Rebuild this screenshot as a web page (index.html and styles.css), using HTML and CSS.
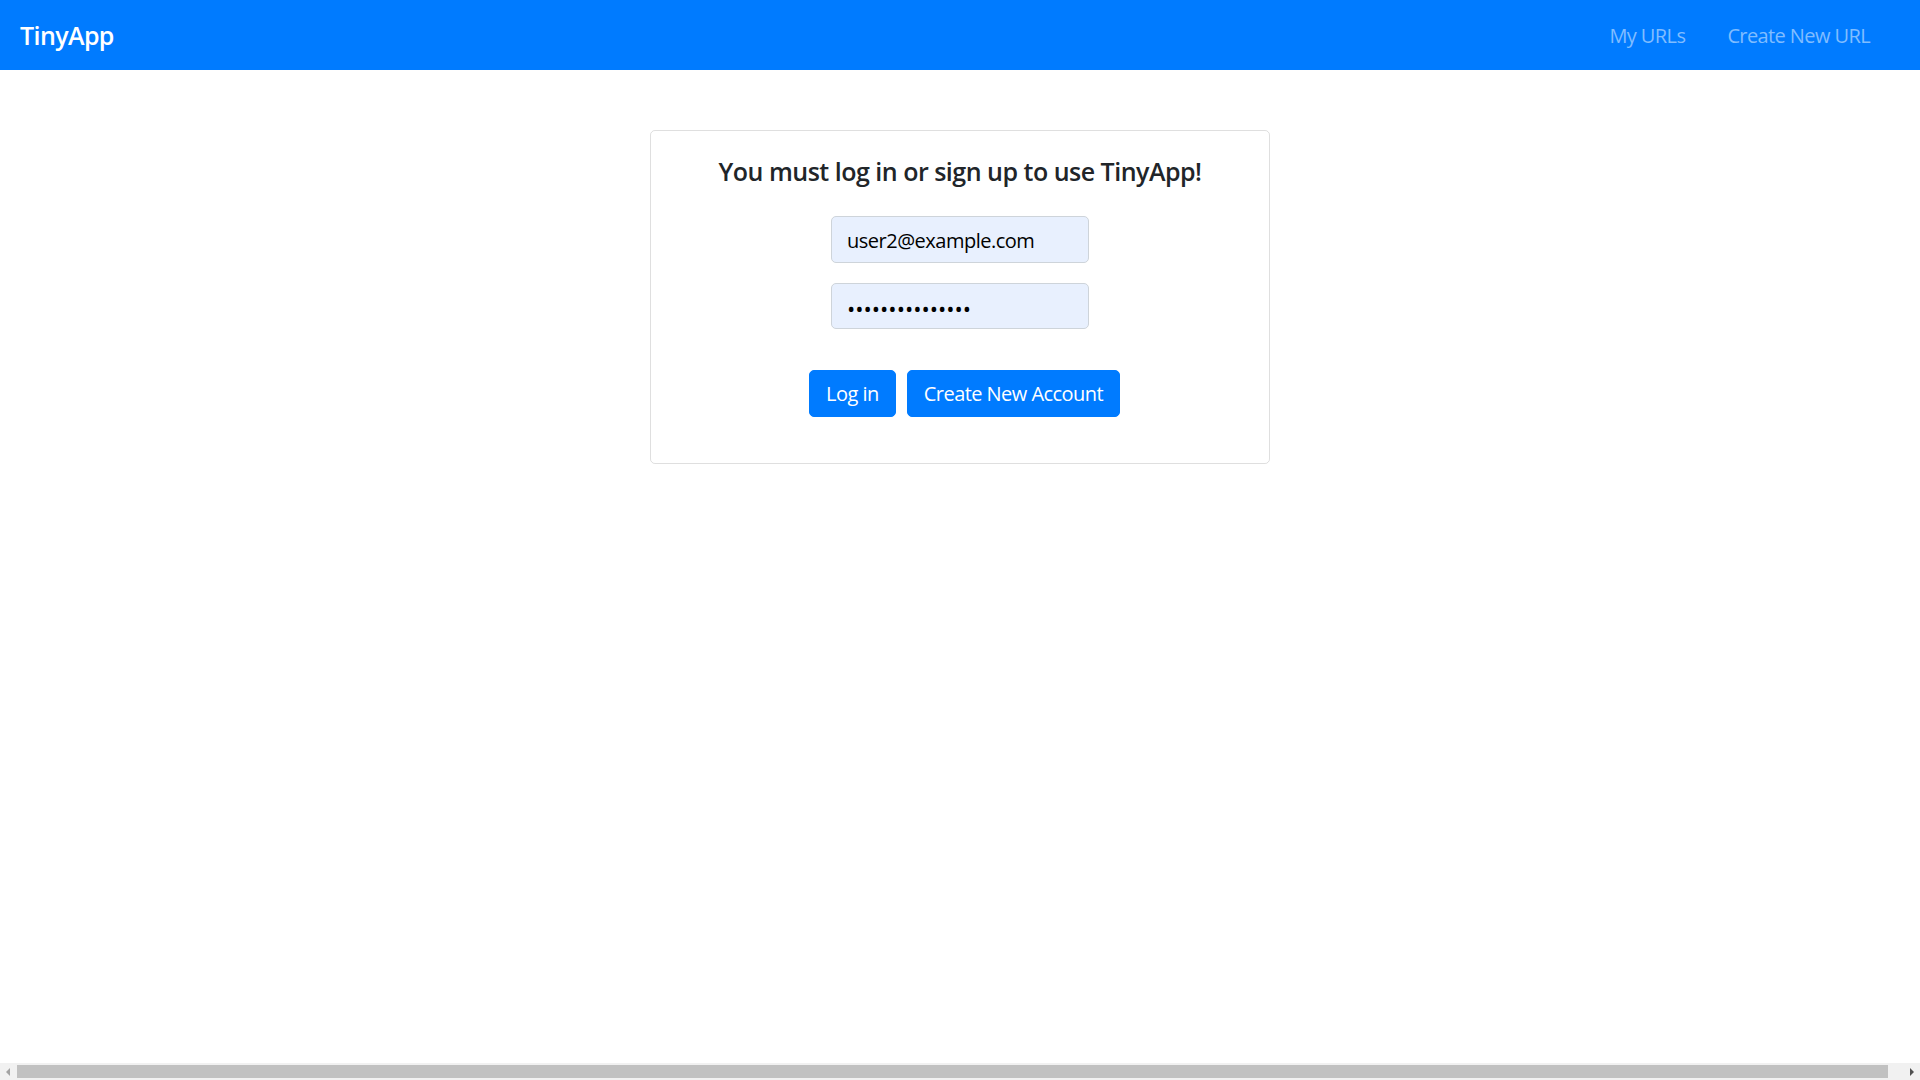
FILE: index.html
```html
<!DOCTYPE html>
<html lang="en">
<head>
<meta charset="utf-8">
<title>TinyApp</title>
<link rel="stylesheet" href="styles.css">
</head>
<body>
<div class="page">
  <nav class="navbar">
    <a class="brand" href="#">TinyApp</a>
    <ul class="nav-links">
      <li><a href="#">My URLs</a></li>
      <li><a href="#">Create New URL</a></li>
    </ul>
  </nav>
  <main class="main">
    <form class="card">
      <h1 class="card-title">You must log in or sign up to use TinyApp!</h1>
      <input class="field" type="email" value="user2@example.com">
      <input class="field field-pass" type="password" value="abcdefghijklmno">
      <div class="actions">
        <button class="btn" type="button">Log in</button>
        <button class="btn" type="button">Create New Account</button>
      </div>
    </form>
  </main>
  <div class="hscroll">
    <span class="arrow arrow-left"></span>
    <span class="thumb"></span>
    <span class="arrow arrow-right"></span>
  </div>
</div>
</body>
</html>
```

FILE: styles.css
```css
html, body {
  margin: 0;
  padding: 0;
  height: 100%;
  overflow: hidden;
}
body {
  font-family: "Open Sans", "Noto Sans", sans-serif;
  color: #212529;
  background: #fff;
}
.page {
  display: flex;
  flex-direction: column;
  height: 100vh;
}
.navbar {
  height: 70px;
  flex: 0 0 70px;
  background: #007bff;
  display: flex;
  align-items: center;
  justify-content: space-between;
  padding: 0 50px 0 20px;
  box-sizing: border-box;
}
.brand {
  color: #fff;
  text-decoration: none;
  font-size: 25px;
  font-weight: 600;
  letter-spacing: -0.6px;
  line-height: 30px;
  padding-bottom: 1px;
}
.nav-links {
  list-style: none;
  margin: 0;
  padding: 2px 0 0;
  display: flex;
  gap: 42px;
}
.nav-links a {
  color: #80bdff;
  text-decoration: none;
  font-size: 20px;
  line-height: 24px;
  letter-spacing: -0.6px;
}
.main {
  flex: 1;
  display: flex;
  flex-direction: column;
  align-items: center;
}
.card {
  width: 620px;
  margin: 60px 0 0;
  box-sizing: border-box;
  border: 1px solid rgba(0, 0, 0, 0.125);
  border-radius: 5px;
  padding: 22px 20px 46px;
  display: flex;
  flex-direction: column;
  align-items: center;
}
.card-title {
  margin: 0 0 27px;
  font-size: 25px;
  line-height: 36px;
  font-weight: 600;
  letter-spacing: -0.5px;
  color: #212529;
}
.field {
  width: 258px;
  height: 47px;
  box-sizing: border-box;
  border: 1px solid #ced4da;
  border-radius: 5px;
  background: #e8f0fe;
  padding: 2px 15px 0;
  font-family: inherit;
  font-size: 20px;
  letter-spacing: -0.5px;
  color: #000;
  margin: 0;
  outline: none;
}
.field-pass {
  margin-top: 20px;
  height: 46px;
  letter-spacing: 0;
  font-size: 22px;
  padding-top: 3px;
}
.actions {
  margin-top: 41px;
  display: flex;
  gap: 11px;
  padding-left: 9px;
}
.btn {
  height: 47px;
  box-sizing: border-box;
  border: 1px solid #007bff;
  background: #007bff;
  color: #fff;
  border-radius: 5px;
  padding: 0 16px;
  font-family: inherit;
  font-size: 20px;
  letter-spacing: -0.5px;
  cursor: pointer;
}
.btn + .btn {
  letter-spacing: -0.55px;
}
.hscroll {
  flex: 0 0 17px;
  height: 17px;
  background: #f1f1f1;
  display: flex;
  align-items: center;
}
.thumb {
  flex: 1;
  height: 13px;
  background: #c1c1c1;
}
.arrow {
  flex: 0 0 17px;
  width: 17px;
  height: 17px;
  position: relative;
}
.arrow-right {
  flex-basis: 32px;
  width: 32px;
}
.arrow::after {
  content: "";
  position: absolute;
  top: 5px;
  width: 0;
  height: 0;
  border-top: 4px solid transparent;
  border-bottom: 4px solid transparent;
}
.arrow-left::after {
  left: 6px;
  border-right: 4px solid #a3a3a3;
}
.arrow-right::after {
  right: 6px;
  border-left: 4px solid #505050;
}
```
